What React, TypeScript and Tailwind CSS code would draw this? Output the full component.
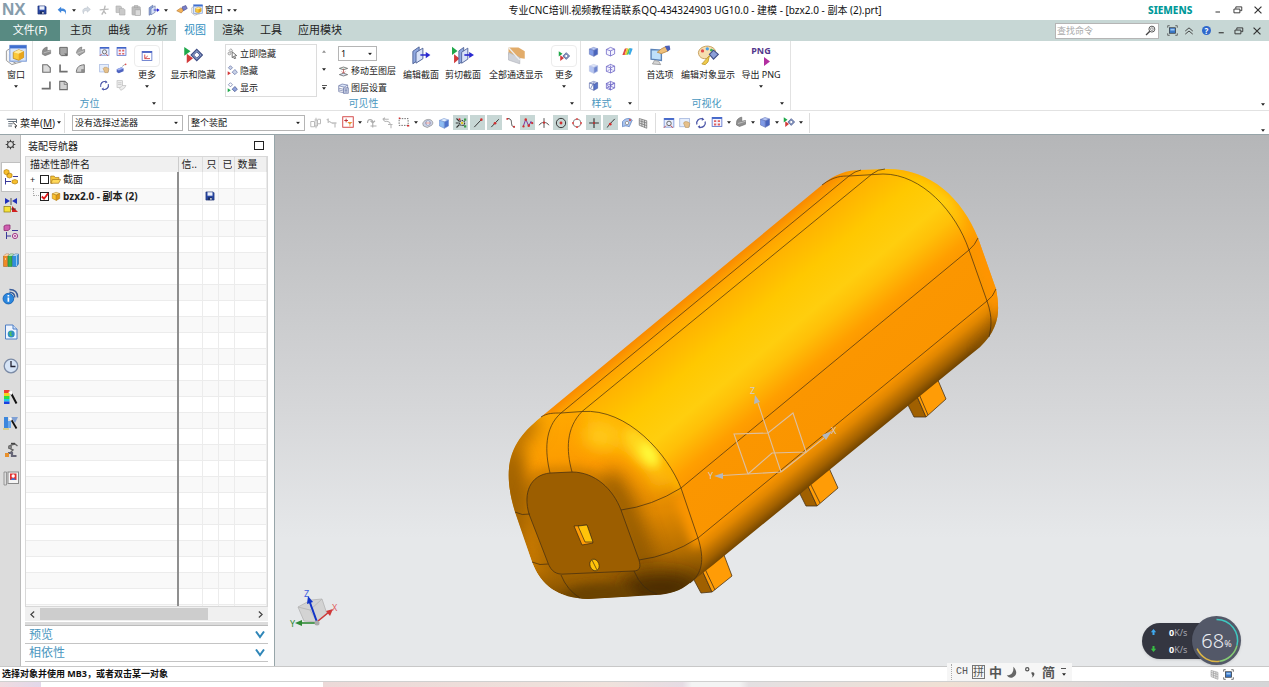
import { ReactNode } from 'react';
import clsx from 'clsx';

const cube = (top: string, left: string, right: string, stroke = '#3d4f9c') => (
  <g stroke={stroke} strokeWidth="0.8" strokeLinejoin="round">
    <path d="M2 4.5 L8 2 L14 4 L8.5 6.5Z" fill={top} />
    <path d="M2 4.5 L8.5 6.5 V15 L2 12Z" fill={left} />
    <path d="M8.5 6.5 L14 4 V12 L8.5 15Z" fill={right} />
  </g>
);

const wireCube = (extra?: ReactNode) => (
  <g fill="#f4f4ff" stroke="#6a62c4" strokeWidth="1.1" strokeLinejoin="round">
    <path d="M2 5 L8 2 L14 4.5 V11.5 L8 14.5 L2 12Z" />
    <path d="M2 5 L8 7 L14 4.5 M8 7 V14.5" fill="none" />
    {extra}
  </g>
);

const redGreen = (
  <g>
    <path d="M1 1.5 L6 5 L1 8.5Z" fill="#1fa84a" />
    <path d="M3 7 L8 10.5 L3 14.5Z" fill="#d23a3a" />
  </g>
);

const ICONS: Record<string, ReactNode> = {
  save: (
    <g>
      <path d="M1.5 1.5 H13 L14.5 3 V14.5 H1.5Z" fill="#2b4aa8" stroke="#152a6c" />
      <path d="M4 2 H12 V7.5 H4Z" fill="#eef2fb" />
      <path d="M4.5 10 H11.5 V14.5 H4.5Z" fill="#1b2d60" />
      <path d="M8.5 11 H10.5 V14 H8.5Z" fill="#fff" />
    </g>
  ),
  undo: <path d="M1 7 L6 2.5 V5 C12 4.5 15 8 12 14 C12.5 9.5 10 8.5 6 9 V11.5Z" fill="#3f86dc" />,
  redo: <path d="M15 7 L10 2.5 V5 C4 4.5 1 8 4 14 C3.5 9.5 6 8.5 10 9 V11.5Z" fill="#d5dbe2" stroke="#b4bcc6" strokeWidth="0.8" />,
  cut: <path d="M9 1 L7 9 M1 7 L14 6 M7 9 L4 14 M7 9 L10 13" stroke="#b9b9b9" strokeWidth="2" fill="none" />,
  copy: (
    <g fill="#c9c9c9" stroke="#b0b0b0">
      <path d="M1.5 1.5 H8 L9.5 3 V11 H1.5Z" />
      <path d="M6.5 5 H12.5 L14.5 7 V14.5 H6.5Z" />
    </g>
  ),
  paste: (
    <g fill="#bdbdbd" stroke="#a8a8a8">
      <rect x="1.5" y="2.5" width="12" height="12" rx="1" />
      <rect x="5" y="1" width="5" height="3" />
      <rect x="6" y="7" width="8" height="8" fill="#dadada" />
    </g>
  ),
  section: (
    <g strokeLinejoin="round">
      <path d="M1.5 5 L6.500 1.5 V11.5 L1.5 15Z" fill="#8fa8e0" stroke="#55689c" strokeWidth="0.8" />
      <path d="M4 6 L9.5 2.5 V11 L4 14.5Z" fill="#d8e2f8" stroke="#55689c" strokeWidth="0.8" />
      <path d="M7.5 8 H13" stroke="#2a2ad0" strokeWidth="1.2" />
      <path d="M11.8 5.5 L15.5 8 L11.8 10.5Z" fill="#2a2ad0" />
    </g>
  ),
  touch: (
    <g>
      <path d="M1 9 L6 5.5 L11 7 L7 12Z" fill="#f3b35a" stroke="#b0702a" strokeWidth="0.8" />
      <path d="M8 4 L13 2 L15 6 L10 9Z" fill="#7a7fc6" stroke="#42478e" strokeWidth="0.8" />
    </g>
  ),
  windowCube: (
    <g>
      <path d="M1 5 L4 3 V12 L8 14 L12 13 M1 5 V12 L5 15 L8 14" fill="#f4f4f4" stroke="#9a9a9a" strokeWidth="0.7" />
      <rect x="3.5" y="1" width="12" height="11.5" fill="#d7e5fb" stroke="#7f9ed8" strokeWidth="0.8" />
      <rect x="3.5" y="1" width="12" height="2.2" fill="#3f6fd0" />
      <path d="M6 6 L10 4.2 L13.5 5.5 V9.8 L10 11.8 L6 10.5Z" fill="#fbc93a" stroke="#b07c12" strokeWidth="0.5" />
      <path d="M6 6 L10 7 L13.5 5.5 L10 4.2Z" fill="#ffeaa0" />
      <path d="M10 7 L13.5 5.5 V9.8 L10 11.8Z" fill="#e8a51e" />
    </g>
  ),
  trimetric: (
    <g stroke="#666" strokeWidth="0.8">
      <path d="M2 9 C2 4 6 2 9 1.5 V7 L14 6 V11 L6 14 L2 12Z" fill="#8f8f8f" />
      <path d="M4 10 L14 7" stroke="#ddd" />
    </g>
  ),
  top: (
    <g>
      <path d="M2.5 2 H13.5 V14 H5 L2.5 12Z" fill="#a8a8a8" stroke="#5f5f5f" strokeWidth="1.3" />
      <path d="M9 11 H13 V14 L11 13Z" fill="#666" />
    </g>
  ),
  iso: (
    <g stroke="#666" strokeWidth="0.8">
      <path d="M2 10 C3 5 6 2 10 1.5 L9 6 L14 5 V9 L6 14Z" fill="#a5a5a5" />
      <path d="M3 11 L13 7" stroke="#e4e4e4" />
    </g>
  ),
  front: <path d="M2.5 2.5 H9 L13.5 7 V13.5 H2.5Z" fill="#dcdcdc" stroke="#6f6f6f" strokeWidth="1.6" />,
  right: <path d="M3 2 V12.5 H14" fill="none" stroke="#6f6f6f" strokeWidth="2.4" />,
  back: (
    <g>
      <path d="M2 12 C3 6 6 3 13.5 2.5 V13.5 H2Z" fill="#cfcfcf" stroke="#6f6f6f" strokeWidth="1.4" />
      <path d="M9 9 H14 V14 H9Z" fill="#8c8c8c" />
    </g>
  ),
  left: <path d="M13 2 V12.5 H1" fill="none" stroke="#6f6f6f" strokeWidth="2.4" />,
  bottom: (
    <g>
      <path d="M2.5 2 H10 L13.5 5 V14 H2.5Z" fill="#d2d2d2" stroke="#6f6f6f" strokeWidth="1.6" />
      <path d="M9 3 V6.5 H13" fill="none" stroke="#6f6f6f" />
    </g>
  ),
  fit: (
    <g>
      <rect x="1.5" y="2" width="13" height="11.5" fill="#e8eefc" stroke="#6f8ad6" />
      <rect x="1.5" y="1.5" width="13" height="2.4" fill="#3f63c8" />
      <circle cx="8" cy="8.5" r="3" fill="none" stroke="#666" strokeWidth="1.3" />
      <path d="M10 11 L13 14.5 M1 14.5 L4 11.5" stroke="#c55" strokeWidth="1.3" />
    </g>
  ),
  zoomAll: (
    <g>
      <rect x="1.5" y="2" width="13" height="12" fill="#f4f4ff" stroke="#4a63c4" />
      <rect x="1.5" y="1.5" width="13" height="2.4" fill="#3f63c8" />
      <path d="M4 5.5 H7 V8 H4Z M9 5.5 H12 V8 H9Z M4 10 H7 V12.5 H4Z M9 10 H12 V12.5 H9Z" fill="#e06464" />
    </g>
  ),
  pan: (
    <g>
      <rect x="1" y="2" width="13" height="11" fill="#e6eefc" stroke="#9fb2dc" />
      <path d="M6 8 C8 5 12 6 14.5 8.5 L13 14 H8.5Z" fill="#e6c08a" stroke="#b18c52" strokeWidth="0.7" />
    </g>
  ),
  perspective: (
    <g>
      <path d="M1 9 L8 6 L11 8 V12 L4 15 L1 13Z" fill="#4e63c0" />
      <path d="M1 9 L8 6 L11 8 L4 11Z" fill="#9fb0f0" />
      <path d="M9 5 L13 2" stroke="#888" />
      <circle cx="14" cy="2" r="1.2" fill="#e05050" />
    </g>
  ),
  rotate: (
    <g fill="none" stroke="#4b56a8" strokeWidth="1.7">
      <path d="M2.5 10 A6 6 0 0 1 10 2.5 M13.5 6 A6 6 0 0 1 6 13.5" />
      <path d="M9.5 0.5 L12.5 3.2 L9 5Z M6.5 11 L3.5 13 L7 15.5Z" fill="#4b56a8" stroke="none" />
    </g>
  ),
  clipboardGrey: (
    <g fill="#ededed" stroke="#bdbdbd">
      <rect x="1.5" y="1" width="8" height="10" />
      <path d="M5 12 L9 8 L14.5 8 L12 12 L7 15Z" />
      <path d="M3 4 H8 M3 6.5 H8" />
    </g>
  ),
  orient: (
    <g>
      <rect x="1.5" y="2" width="13" height="12" fill="#fff" stroke="#4a63c4" />
      <rect x="1.5" y="1.5" width="13" height="2.4" fill="#4a63c4" />
      <path d="M5 6 V11.5 H12 M5 11.5 L9 8" fill="none" stroke="#d04040" strokeWidth="1.2" />
    </g>
  ),
  showHide: (
    <g>
      {redGreen}
      <path d="M6.5 8 L11 3.5 L15.5 8 L11 12.5Z" fill="#8b9fc8" stroke="#3f4e86" strokeWidth="0.9" />
      <path d="M8.5 8 L11 5.5 L13.5 8 L11 10.5Z" fill="#fff" stroke="#3f4e86" strokeWidth="0.7" />
    </g>
  ),
  hideNow: (
    <g>
      <path d="M3 3.5 L5.5 1 L8 3.5 L5.5 6Z" fill="#e6e6e6" stroke="#888" />
      <circle cx="3.5" cy="8" r="2" fill="#e6e6e6" stroke="#888" />
      <path d="M7.5 5.5 L14 11 L11 11.5 L12.5 15 L10.5 15.5 L9.5 12.5 L7.5 14Z" fill="#fff" stroke="#333" />
    </g>
  ),
  hide: (
    <g>
      <path d="M1 9 L5.5 12 L1 15Z" fill="#d23a3a" />
      <path d="M2 4 L5 1 L8 4 L5 7Z" fill="#c9d2e8" stroke="#5f6da0" />
      <path d="M7.5 10.5 L11.5 6.5 L15 10.5 L11.5 14Z" fill="#c9d2e8" stroke="#5f6da0" />
    </g>
  ),
  show: (
    <g>
      <path d="M1 9 L5.5 12 L1 15Z" fill="#1fa84a" />
      <path d="M2 4 L5 1 L8 4 L5 7Z" fill="#fff" stroke="#5f6da0" />
      <path d="M7.5 10.5 L11.5 6.5 L15 10.5 L11.5 14Z" fill="#8fa2dc" stroke="#3f4e86" />
    </g>
  ),
  moveLayer: (
    <g fill="none" stroke="#555">
      <path d="M2 3.5 L8 1.5 L14 3.5 L8 5.5Z" fill="#e4f0e8" />
      <path d="M2 12.5 L8 10.5 L14 12.5 L8 14.5Z" fill="#dfe7f8" />
      <path d="M8 4 V10 M5.5 8 L8 10.5 L10.5 8" stroke="#b54040" />
    </g>
  ),
  layers: (
    <g stroke="#59679a" strokeWidth="0.9">
      <path d="M1 4 L6 1.5 L14 3 L9 6Z" fill="#dce6fa" />
      <path d="M1 7.5 L9 9.5 L14 6.5 M1 10 L9 12 L14 9 M1 12.5 L9 14.5 L14 12 M1 4 V12.5 M14 3 V12" fill="none" />
      <path d="M8 7 H15 V15 H8Z" fill="#d7def0" />
      <path d="M9.5 9 H13.5 M9.5 11 H13.5 M9.5 13 H13.5" />
    </g>
  ),
  cutSection: (
    <g strokeLinejoin="round">
      <path d="M0 2 L4 5 L0 8Z" fill="#1fa84a" />
      <path d="M1.5 7.5 L5.5 10.5 L1.5 14Z" fill="#d23a3a" />
      <path d="M5 5 L8.5 2.5 V12 L5 14.5Z" fill="#8fa8e0" stroke="#55689c" strokeWidth="0.7" />
      <path d="M7 6 L11.5 3 V11 L7 14Z" fill="#d8e2f8" stroke="#55689c" strokeWidth="0.7" />
      <path d="M9 8 H13" stroke="#2a2ad0" strokeWidth="1.2" />
      <path d="M12.5 5.8 L16 8 L12.5 10.2Z" fill="#2a2ad0" />
    </g>
  ),
  seeThrough: (
    <g>
      <path d="M2 2 H10 L15 5 V11 L8 10 L2 8Z" fill="#e2ac6a" />
      <path d="M2 6 L11 10 V15 L2 12Z" fill="#cfd2d8" stroke="#b7bac2" strokeWidth="0.6" />
      <path d="M2 2 L11 12" stroke="#eee" />
    </g>
  ),
  shaded: cube('#b9c9f6', '#7f9ae6', '#4864bd', '#5f72b8'),
  shadedSoft: cube('#dfe6fb', '#b4c4f2', '#6f86cf', '#b4bfe4'),
  halfCube: (
    <g>
      {cube('#e9eefc', '#fff', '#5873c8')}
      <path d="M4 12 L9 3" stroke="#4a5cae" />
    </g>
  ),
  wire: wireCube(),
  wireDash: wireCube(<path d="M2 12 L8 9 L14 11.5 M8 2 V9" strokeDasharray="1.5 1" fill="none" />),
  wireAll: wireCube(<path d="M2 12 L14 4.5 M8 2 L8 9 L14 11.5 M2 5 L8 14.5" fill="none" />),
  rainbow: (
    <g>
      <path d="M4 4 L7 3 L4 13 L0.5 13Z" fill="#e04848" />
      <path d="M7 3 L9.5 4 L6.5 13 H4Z" fill="#f3c92b" />
      <path d="M9.5 4 L12 3 L9.5 12 L6.5 13Z" fill="#54c455" />
      <path d="M12 3 L15.5 4 L12 13 L9.5 12Z" fill="#3aa8e8" />
    </g>
  ),
  prefs: (
    <g>
      <path d="M1.5 4 L9 4.5 V12 L1.5 11Z" fill="#bfe0fa" stroke="#5b83b8" />
      <path d="M4 12 L7 12.5 L8.500 15 L2.5 14.5Z" fill="#d5d5d5" stroke="#999" strokeWidth="0.6" />
      <path d="M6 6 L9 3.5 L12 2 L14 5 L9 7Z" fill="#f0c07a" stroke="#b98948" strokeWidth="0.6" />
      <path d="M11.5 1.5 L15 1 L15.5 4 L13.5 5.5Z" fill="#4a5fb8" />
    </g>
  ),
  palette: (
    <g>
      <path d="M1 6 C2 1 10 0 13 4 C15 8 10 8 9 9 C7 12 1 11 1 6Z" fill="#f6deb0" stroke="#c7a060" strokeWidth="0.7" />
      <circle cx="4" cy="5" r="1.2" fill="#e24b4b" />
      <circle cx="7.5" cy="3.5" r="1.2" fill="#49a0e8" />
      <circle cx="10.5" cy="4.5" r="1" fill="#3db35a" />
      <path d="M3.500 14.5 L9 8.5 L8 13 L6 15Z" fill="#f0cb4c" stroke="#b8942c" strokeWidth="0.6" />
      <path d="M9 7.5 L12 4.5 L15.5 7.5 L12 11Z" fill="#8b9fd8" stroke="#3f4e86" strokeWidth="0.8" />
    </g>
  ),
  menu: (
    <g fill="none" stroke="#5f6b78" strokeWidth="1.3">
      <path d="M1 3 H14 M3 6 H14 M3 9 H9 M3 12 H8 M14 3 V8" />
      <path d="M9 7 L14.5 12 L12 12.5 L13 15" stroke="#333" fill="#fff" />
    </g>
  ),
  filterGrey: <path d="M1 6 H6 V13 H1Z M6 4 H10 V12 H6 M10 3 H14 V9 H10 M8 1 V15" fill="none" stroke="#b2b2b2" strokeWidth="1.2" />,
  dotsGrey: <path d="M1 3 L6 7 M3 2 V8 M8 8 H14 M12 8 V14 M6 7 L10 9" fill="none" stroke="#c2c2c2" strokeWidth="1.7" />,
  snapBox: (
    <g>
      <rect x="1" y="1" width="14" height="14" fill="#fff" stroke="#d03a3a" strokeWidth="1.2" />
      <path d="M3 6 H8 M5.5 3.5 V8.5" stroke="#c03030" strokeWidth="1.3" />
      <path d="M7 8 L14 8 L11 11 V14 L10 14 V11Z" fill="#e8963a" />
    </g>
  ),
  arrowGrey: <path d="M2 8 C2 2 9 2 9 7 M6 5 L9 8 L12 5 M9 8 V14 M6 12 H14" fill="none" stroke="#adadad" strokeWidth="1.5" />,
  filterArrow: <path d="M1 3 H9 M4 6 C8 5 11 7 11 10 M8 10 H14 M12 10 V15 M1 3 L4 1 M1 3 L4 6" fill="none" stroke="#b5b5b5" strokeWidth="1.4" />,
  marquee: (
    <g>
      <rect x="1.5" y="3.5" width="12" height="9" fill="none" stroke="#444" strokeDasharray="2 1.5" />
      <path d="M1 3 L3 3 M12 13 H15" stroke="#d03030" strokeWidth="2" />
    </g>
  ),
  detail: (
    <g stroke="#777" strokeWidth="0.8">
      <path d="M1 9 C2 4 8 2 12 4 C15 6 15 9 13 11 L7 14 L2 12Z" fill="#ccd3e6" />
      <circle cx="8" cy="8" r="3" fill="#fff" stroke="#6470a4" />
      <path d="M5 8 L11 8" stroke="#c04040" />
    </g>
  ),
  solid: cube('#e4f0ff', '#8dbcf2', '#4e74cc', '#6f90d0'),
  snapAll: (
    <g>
      <path d="M2 2 L6 6 M2 14 L6 10 M1 8 H5" stroke="#333" strokeWidth="1.5" />
      <circle cx="9.5" cy="8" r="3.4" fill="none" stroke="#333" strokeWidth="1.4" strokeDasharray="2 1" />
      <circle cx="9.5" cy="8" r="1.6" fill="#e3c521" />
      <path d="M12 2 H15 V5 H12Z M12 11 H15 V14 H12Z" fill="#3b9b4a" />
      <circle cx="6" cy="3" r="1.4" fill="#d03030" />
    </g>
  ),
  endPoint: (
    <g>
      <path d="M3 13.5 L12 4" stroke="#333" strokeWidth="1.3" />
      <circle cx="12.5" cy="3.5" r="1.7" fill="#d03030" />
    </g>
  ),
  midPoint: (
    <g>
      <path d="M3 13.5 L13 3" stroke="#333" strokeWidth="1.3" />
      <circle cx="8" cy="8.3" r="1.8" fill="#d03030" />
    </g>
  ),
  curvePoint: (
    <g>
      <path d="M3 2 C10 2 8 7 9 10 C9.5 13 11 13 13 13.5" fill="none" stroke="#333" strokeWidth="1.2" />
      <circle cx="3" cy="2.5" r="1.3" fill="#d03030" />
      <circle cx="12" cy="13" r="1.3" fill="#d03030" />
    </g>
  ),
  spline: (
    <g>
      <path d="M1.5 13 L5 3 L9 12 L12 6 L14.5 9" fill="none" stroke="#7a2fa0" strokeWidth="1.3" />
      <circle cx="5" cy="3.5" r="1.7" fill="#d03030" />
      <circle cx="9" cy="11.5" r="1.7" fill="#d03030" />
      <circle cx="2" cy="12.5" r="1.5" fill="#d03030" />
      <circle cx="13.5" cy="8" r="1.5" fill="#d03030" />
    </g>
  ),
  intersect: (
    <g>
      <path d="M8 1.5 V14.5 M1.5 11 C4 6 12 6 14.5 11" fill="none" stroke="#444" strokeWidth="1.2" />
      <circle cx="8" cy="7.5" r="1.5" fill="#d03030" />
    </g>
  ),
  center: (
    <g>
      <circle cx="8" cy="8" r="6.2" fill="none" stroke="#333" strokeWidth="1.3" />
      <circle cx="8" cy="8" r="1.9" fill="#d03030" />
    </g>
  ),
  quadrant: (
    <g>
      <circle cx="8" cy="8" r="5.2" fill="none" stroke="#666" />
      <path d="M6.5 1.5 H9.5 V4 H6.5Z M6.5 12 H9.5 V14.5 H6.5Z M1.5 6.5 H4 V9.5 H1.5Z M12 6.5 H14.5 V9.5 H12Z" fill="#d86060" />
    </g>
  ),
  plus: (
    <g>
      <path d="M8 1.5 V14.5 M1.5 8 H14.5" stroke="#333" strokeWidth="1.5" />
      <circle cx="8" cy="8" r="1.3" fill="#d03030" />
    </g>
  ),
  onCurve: (
    <g>
      <path d="M3 14 C5 10 9 7 13 2.5" fill="none" stroke="#333" strokeWidth="1.3" />
      <circle cx="7" cy="9.5" r="1.8" fill="#d03030" />
    </g>
  ),
  face: (
    <g>
      <path d="M2 6 C6 1 12 1 15 4 L11 13 C7 11 4 12 2 13Z" fill="#a9c4ee" stroke="#5d80bf" />
      <circle cx="8" cy="8" r="2.2" fill="#fff" stroke="#888" />
      <circle cx="12" cy="4" r="1.5" fill="#d05050" />
    </g>
  ),
  grid: <path d="M3 2 L13 5 V15 L3 11Z M3 5 L13 8 M3 8 L13 11.5 M6.5 3 V12.5 M10 4 V14" fill="#ddd" stroke="#777" />,
  gear: (
    <g fill="none" stroke="#444">
      <circle cx="8" cy="8" r="4.3" strokeWidth="1.6" />
      <path d="M8 1 V4 M8 12 V15 M1 8 H4 M12 8 H15 M3 3 L5 5 M11 11 L13 13 M3 13 L5 11 M11 5 L13 3" strokeWidth="1.5" />
    </g>
  ),
  assemblyNav: (
    <g>
      <path d="M1 1.500 L3.500 0.500 L6 1.5 V4.5 L3.5 6 L1 4.5Z M4 5 L6.5 4 L9 5 V8 L6.5 9 L4 8Z" fill="#f7bf2c" stroke="#b3800e" strokeWidth="0.7" />
      <path d="M2.5 9 V15.500 M2.5 12.5 H8 M10 7.5 H15" stroke="#3a3a9a" />
      <path d="M9 11.5 L12 10.5 L14.5 11.5 V14 L12 15 L9 14Z" fill="#f7bf2c" stroke="#b3800e" strokeWidth="0.7" />
    </g>
  ),
  constraint: (
    <g>
      <path d="M2 1 L7 4 L2 7Z M14 1 L9 4 L14 7Z" fill="#2030b8" />
      <path d="M8 1 V8" stroke="#333" strokeWidth="0.8" />
      <rect x="1" y="9.5" width="6.5" height="5.5" fill="#f6e23a" stroke="#8a7a10" strokeWidth="0.7" />
      <path d="M9 9 L15 15 H9Z" fill="#d02020" />
      <path d="M8 12 H13" stroke="#222" strokeWidth="0.7" />
    </g>
  ),
  partNav: (
    <g>
      <path d="M1 2 L3 1 H7 V5 L5 6.500 H1Z" fill="#cf5fb0" stroke="#8d2f72" strokeWidth="0.8" />
      <path d="M3.5 8 V15 M3.5 12 H8 M9 6.5 H15" stroke="#3a3a9a" />
      <circle cx="12" cy="12" r="2.6" fill="#f3dbed" stroke="#a03c86" />
      <circle cx="12" cy="12" r="0.9" fill="#a03c86" />
    </g>
  ),
  library: (
    <g strokeWidth="0.5">
      <path d="M0.5 4 L3 2 H6 L4.5 4 V14.5 H0.5Z" fill="#f08a24" stroke="#a4570e" />
      <path d="M5 4 L7.5 2 H10.5 L9 4 V14.5 H5Z" fill="#35b04a" stroke="#1c7430" />
      <path d="M9.5 4 L12 2 H15.5 V12 L13.5 14.5 H9.5Z" fill="#2f8fdc" stroke="#15589a" />
      <path d="M0.500 4 H4.5 L6 2 H3Z M5 4 H9 L10.5 2 H7.5Z M9.5 4 H13.5 L15.5 2 H12Z" fill="#fff" opacity="0.6" />
      <path d="M13.5 4 V14 M2.500 6 V8" stroke="#fff" />
    </g>
  ),
  info: (
    <g>
      <path d="M7 4 C10 4 12 6 12 9 M7 1.5 C12 1.5 14.7 4.5 14.7 9" fill="none" stroke="#3a5d9a" strokeWidth="1.4" />
      <circle cx="6" cy="10" r="5" fill="#2b87df" stroke="#155fae" strokeWidth="0.8" />
      <path d="M5.2 9 H6.8 V13 H5.2Z M5.2 6.5 H6.8 V8 H5.2Z" fill="#fff" />
    </g>
  ),
  web: (
    <g>
      <path d="M2.5 1 H10 L14 5 V15 H2.5Z" fill="#eef5ff" stroke="#4e7fc4" />
      <path d="M10 1 V5 H14" fill="#cfe0f8" stroke="#4e7fc4" />
      <circle cx="8.2" cy="10" r="3.5" fill="#2f8fc4" />
      <path d="M6 8 L9 7.5 L8 10 L9.5 12 L7 12Z" fill="#4fc05a" />
    </g>
  ),
  clock: (
    <g>
      <circle cx="8" cy="8" r="6.8" fill="#d6e4f6" stroke="#7b8ba6" strokeWidth="1.3" />
      <path d="M8 3 V8.5 H12.5" fill="none" stroke="#223" strokeWidth="1.3" />
    </g>
  ),
  colors: (
    <g>
      <path d="M1 1 H6.5 V4 H1Z" fill="#f04030" />
      <path d="M1 4 H6.5 V7 H1Z" fill="#f7d21e" />
      <path d="M1 7 H6.5 V10 H1Z" fill="#30e040" />
      <path d="M1 10 H6.5 V12.5 H1Z" fill="#20c8e8" />
      <path d="M1 12.5 H6.5 V15 H1Z" fill="#1840e0" />
      <path d="M8.500 5 L13.5 14.5" stroke="#111" strokeWidth="2" />
      <path d="M5 3 L9 2 L9 6Z" fill="#fff" />
    </g>
  ),
  materials: (
    <g>
      <path d="M1 3 H5 V14 H1Z" fill="#3d87dc" />
      <path d="M5 7 H8 V14 H5Z" fill="#6ba8ea" />
      <path d="M8 3 H15 L12 9Z" fill="#7fa0d4" />
      <path d="M8.500 6 L13.5 14.5" stroke="#111" strokeWidth="1.8" />
      <path d="M5.500 4 L8.500 3.500 L8.500 7Z" fill="#fff" />
      <path d="M0 15 H6" stroke="#d8c040" />
    </g>
  ),
  robot: (
    <g fill="none" stroke="#666" strokeWidth="1.4">
      <path d="M14.500 4 L12 2 L8 3 L6 6 L10 8 L7 11" />
      <path d="M8 1.500 H12" stroke="#444" />
      <circle cx="7" cy="5" r="1.3" fill="#ddd" />
      <path d="M5 11 H9 V14 H13.500" stroke="#667" strokeWidth="2.200" />
      <path d="M2 11 H6 V15 H2Z" fill="#e8902c" stroke="none" />
    </g>
  ),
  roles: (
    <g>
      <path d="M1 2 H3.5 V15 H1Z" fill="#ddd" stroke="#888" strokeWidth="0.8" />
      <rect x="5" y="2" width="10.5" height="11.5" fill="#f4f4f4" stroke="#888" />
      <rect x="7" y="3.5" width="6.5" height="6.5" fill="#e23030" />
      <circle cx="10.2" cy="6" r="1.7" fill="#fff" />
      <path d="M8 10 C8 7.5 12.5 7.5 12.5 10Z" fill="#3a78d8" />
    </g>
  ),
  folder: (
    <g strokeLinejoin="round">
      <path d="M1 3 H6 L7.5 5 H13 V8 L3 13.5 H1Z" fill="#f6c63a" stroke="#a8781a" />
      <path d="M3.5 8 H15.5 L12.5 13.5 H1.5Z" fill="#ffd95a" stroke="#a8781a" />
    </g>
  ),
  part: cube('#ffe48a', '#fbc22e', '#e09a12', '#a87210'),
  search: (
    <g fill="none" stroke="#444" strokeWidth="1.3">
      <circle cx="10" cy="6" r="4.3" />
      <circle cx="10" cy="6" r="2" strokeWidth="0.8" />
      <path d="M7 9 L1.5 14.5" strokeWidth="2" />
    </g>
  ),
  fullScreen: (
    <g>
      <path d="M1 4 V1 H4 M12 1 H15 V4 M15 12 V15 H12 M4 15 H1 V12" fill="none" stroke="#555" strokeWidth="1.2" />
      <rect x="3.5" y="4" width="9" height="8" fill="#3a78c8" stroke="#333" />
      <path d="M5 5.5 H11 V8 H5Z" fill="#9cc8f4" />
    </g>
  ),
  chevronsUp: <path d="M2 8 L8 3 L14 8 M2 13 L8 8 L14 13" fill="none" stroke="#444" strokeWidth="1.6" />,
  minimize: <path d="M3 12 H12" stroke="#333" strokeWidth="2" />,
  restore: <path d="M4.5 6 V3 H14 V9 H11.5 M1.5 6.5 H11 V12.5 H1.5Z" fill="none" stroke="#333" strokeWidth="1.5" />,
  close: <path d="M2.5 2.5 L13.5 13.5 M13.5 2.5 L2.5 13.5" stroke="#333" strokeWidth="1.9" />,
  moon: <path d="M9 1 C14 6 14 12 8 14 C5 15 2 13.5 1 11 C5 12.5 10 9 9 1Z" fill="#666" />,
  punct: (
    <g>
      <circle cx="4" cy="4" r="2" fill="none" stroke="#555" strokeWidth="1.5" />
      <path d="M9 8 C14 6 14 12 9.5 14.5 C12 11 9 11 9 8Z" fill="#555" />
    </g>
  ),
};

function Icon({ name, className = 'size-3' }: { name: string; className?: string }) {
  return (
    <svg viewBox="0 0 16 16" className={clsx('shrink-0', className)} aria-hidden="true">
      {ICONS[name]}
    </svg>
  );
}

function Caret({ className }: { className?: string }) {
  return (
    <svg viewBox="0 0 6 4" className={clsx('h-[3px] w-1 shrink-0', className)} aria-hidden="true">
      <path d="M0 0 H6 L3 4Z" fill="#222" />
    </svg>
  );
}

function IconButton({ name, label, className, icon = 'size-3' }: { name: string; label: string; className?: string; icon?: string }) {
  return (
    <button aria-label={label} className={clsx('flex shrink-0 items-center justify-center hover:bg-[#dbe8e6]', className)}>
      <Icon name={name} className={icon} />
    </button>
  );
}

function DropArrow({ label, className = 'h-4 w-2' }: { label: string; className?: string }) {
  return (
    <button aria-label={label} className={clsx('flex shrink-0 items-center justify-center', className)}>
      <Caret />
    </button>
  );
}

interface SelectProps {
  label: string;
  value: string;
  className: string;
}

function SelectBox({ label, value, className }: SelectProps) {
  return (
    <div className={clsx('relative shrink-0', className)}>
      <select aria-label={label} className="block size-full appearance-none border border-[#b5b5b5] bg-white pl-[2px] text-[9px] leading-[13px] text-[#111]">
        <option>{value}</option>
      </select>
      <Caret className="pointer-events-none absolute top-1/2 right-[5px] -translate-y-1/2" />
    </div>
  );
}

function TitleBar() {
  return (
    <header className="flex h-5 shrink-0 items-center bg-white">
      <div className="flex w-[242px] shrink-0 items-center">
        <span className="w-[34px] shrink-0 pl-[2px] font-['Liberation_Sans',sans-serif] text-[17px] leading-5 font-bold text-[#869cab]">NX</span>
        <IconButton name="save" label="保存" className="h-4 w-4" icon="size-[10px]" />
        <IconButton name="undo" label="撤消" className="ml-1 h-4 w-4" icon="size-[11px]" />
        <DropArrow label="撤消列表" />
        <IconButton name="redo" label="重做" className="h-4 w-4" icon="size-[10px]" />
        <IconButton name="cut" label="剪切" className="ml-[2px] h-4 w-4" icon="size-[11px]" />
        <IconButton name="copy" label="复制" className="h-4 w-4" icon="size-[11px]" />
        <IconButton name="paste" label="粘贴" className="h-4 w-4" icon="size-[11px]" />
        <IconButton name="section" label="截面" className="ml-[2px] h-4 w-4" icon="size-3" />
        <DropArrow label="截面选项" />
        <IconButton name="touch" label="触控模式" className="ml-1 h-4 w-4" icon="size-3" />
        <button className="ml-px flex shrink-0 items-center gap-[2px] text-[9px] leading-4 whitespace-nowrap">
          <Icon name="windowCube" className="size-3" />
          窗口
          <Caret className="ml-[2px]" />
        </button>
        <DropArrow label="工具条选项" />
      </div>
      <h1 className="flex-1 text-center text-[10px] leading-5 whitespace-nowrap text-[#111]">
        专业CNC培训.视频教程请联系QQ-434324903 UG10.0 - 建模 - [bzx2.0 - 副本 (2).prt]
      </h1>
      <span className="w-[62px] text-[10px] leading-5 font-extrabold text-[#099]">SIEMENS</span>
      <IconButton name="minimize" label="最小化" className="h-4 w-4" icon="size-2" />
      <IconButton name="restore" label="还原" className="ml-1 h-4 w-4" icon="size-[10px]" />
      <IconButton name="close" label="关闭" className="mr-[3px] ml-1 h-4 w-4" icon="size-[10px]" />
    </header>
  );
}

const TABS = ['主页', '曲线', '分析', '视图', '渲染', '工具', '应用模块'];

function TabBar() {
  return (
    <nav className="flex h-[21px] shrink-0 items-stretch bg-[#c7d7d5] text-[11px] text-[#222]">
      <button className="mr-[2px] w-[60px] bg-[#588a82] text-white">文件(F)</button>
      {TABS.map((tab) => (
        <button key={tab} className={clsx('px-2', tab === '视图' && 'bg-white text-[#2f8fc0]')}>
          {tab}
        </button>
      ))}
      <div className="ml-auto flex items-center">
        <div className="flex h-4 w-[104px] items-center border border-[#b5b5b5] bg-white">
          <input aria-label="查找命令" placeholder="查找命令" className="w-[89px] pl-px text-[9px] leading-3 outline-none placeholder:text-[#aaa]" />
          <Icon name="search" className="size-[11px]" />
        </div>
        <IconButton name="fullScreen" label="全屏" className="ml-[5px] h-4 w-4" icon="size-[11px]" />
        <IconButton name="chevronsUp" label="最小化功能区" className="ml-px h-4 w-4" icon="size-[10px]" />
        <button aria-label="帮助" className="ml-[5px] size-[9px] rounded-full bg-[#2f68cc] text-[8px] leading-[9px] font-bold text-white">
          ?
        </button>
        <IconButton name="minimize" label="最小化窗口" className="ml-[2px] h-4 w-4" icon="size-[9px]" />
        <IconButton name="restore" label="还原窗口" className="ml-[2px] h-4 w-4" icon="size-[10px]" />
        <IconButton name="close" label="关闭窗口" className="mr-1 ml-[2px] h-4 w-4" icon="size-[10px]" />
      </div>
    </nav>
  );
}

function Group({ label, className, children }: { label: string; className?: string; children: ReactNode }) {
  return (
    <section aria-label={label} className={clsx('flex shrink-0 flex-col border-r border-[#e2e2e2]', className)}>
      <div className="flex h-[55px] items-start pt-px">{children}</div>
      <div className="flex h-[14px] items-center">
        <span className="flex-1 text-center text-[10px] leading-[14px] text-[#4a97c0]">{label}</span>
        <DropArrow label={`${label}选项`} className="h-3 w-4" />
      </div>
    </section>
  );
}

interface BigButtonProps {
  name: string;
  label: string;
  className: string;
  arrow?: boolean;
  icon?: string;
}

function BigButton({ name, label, className, arrow, icon = 'size-5' }: BigButtonProps) {
  return (
    <button className={clsx('flex shrink-0 flex-col items-center hover:bg-[#eef5f4]', className)}>
      <span className="flex h-[25px] items-center justify-center">
        <Icon name={name} className={icon} />
      </span>
      <span className="text-[9px] leading-4 whitespace-nowrap">{label}</span>
      {arrow && <Caret className="mt-[2px]" />}
    </button>
  );
}

function MoreButton({ name, className }: { name: string; className?: string }) {
  return (
    <button className={clsx('flex w-[26px] shrink-0 flex-col items-center', className)}>
      <span className="mt-[3px] flex h-[22px] w-full items-center justify-center rounded-sm border border-[#ececec]">
        <Icon name={name} className="size-3" />
      </span>
      <span className="text-[9px] leading-4">更多</span>
      <Caret className="mt-[2px]" />
    </button>
  );
}

const VIEWS = [
  ['trimetric', '正三轴测图'],
  ['top', '俯视图'],
  ['iso', '正等测图'],
  ['front', '前视图'],
  ['right', '右视图'],
  ['back', '后视图'],
  ['left', '左视图'],
  ['bottom', '仰视图'],
];

const VIEW_OPS = [
  ['fit', '适合窗口'],
  ['zoomAll', '缩放'],
  ['pan', '平移'],
  ['perspective', '透视'],
  ['rotate', '旋转'],
  ['clipboardGrey', '复制视图'],
];

const STYLES = [
  ['shaded', '带边着色'],
  ['wire', '带有淡化边的线框'],
  ['rainbow', '面分析'],
  ['shadedSoft', '着色'],
  ['wireDash', '带有隐藏边的线框'],
  ['', ''],
  ['halfCube', '局部着色'],
  ['wireAll', '静态线框'],
];

function IconGrid({ items, className }: { items: string[][]; className: string }) {
  return (
    <div className={clsx('grid shrink-0 auto-rows-[17px] pt-px', className)}>
      {items.map(([name, label], i) => (name ? <IconButton key={name} name={name} label={label} icon="size-[11px]" /> : <span key={i} />))}
    </div>
  );
}

function Ribbon() {
  return (
    <div className="flex h-[70px] shrink-0 border-b border-[#e2e2e2] bg-white text-[#222]">
      <div className="flex w-[33px] shrink-0 justify-center border-r border-[#e2e2e2] pt-px">
        <BigButton name="windowCube" label="窗口" className="w-6" icon="size-[22px]" arrow />
      </div>
      <Group label="方位" className="w-[130px]">
        <IconGrid items={VIEWS} className="ml-[5px] grid-cols-[17px_17px_17px]" />
        <IconGrid items={VIEW_OPS} className="ml-[7px] grid-cols-[17px_17px]" />
        <MoreButton name="orient" className="ml-1" />
      </Group>
      <Group label="可见性" className="w-[418px]">
        <BigButton name="showHide" label="显示和隐藏" className="ml-[6px] w-12" />
        <ul className="mt-[2px] ml-2 w-[92px] shrink-0 border border-[#dcdcdc]">
          {[
            ['hideNow', '立即隐藏'],
            ['hide', '隐藏'],
            ['show', '显示'],
          ].map(([name, label]) => (
            <li key={name}>
              <button className="flex h-[17px] items-center gap-[2px] pl-px text-[9px] leading-4">
                <Icon name={name} className="size-[11px]" />
                {label}
              </button>
            </li>
          ))}
        </ul>
        <div className="grid w-[14px] shrink-0 auto-rows-[18px]">
          <button aria-label="上一行" className="flex items-center justify-center">
            <Caret className="rotate-180 opacity-50" />
          </button>
          <button aria-label="下一行" className="flex items-center justify-center">
            <Caret />
          </button>
          <button aria-label="全部显示" className="flex flex-col items-center justify-center gap-px">
            <span className="h-px w-[5px] bg-[#555]" />
            <Caret />
          </button>
        </div>
        <div className="ml-[7px] flex w-[61px] shrink-0 flex-col pt-1">
          <SelectBox label="工作图层" value="1" className="h-[15px] w-[39px]" />
          <button className="mt-px flex h-[18px] items-center gap-[2px] text-[9px] leading-4 whitespace-nowrap">
            <Icon name="moveLayer" className="size-[11px]" />
            移动至图层
          </button>
          <button className="flex h-4 items-center gap-[2px] text-[9px] leading-4 whitespace-nowrap">
            <Icon name="layers" className="size-[11px]" />
            图层设置
          </button>
        </div>
        <BigButton name="section" label="编辑截面" className="ml-px w-[42px]" />
        <BigButton name="cutSection" label="剪切截面" className="w-[42px]" icon="size-[22px]" />
        <BigButton name="seeThrough" label="全部通透显示" className="w-16" />
        <MoreButton name="showHide" className="ml-[3px]" />
      </Group>
      <Group label="样式" className="w-[58px]">
        <IconGrid items={STYLES} className="ml-1 grid-cols-[17px_17px_17px]" />
      </Group>
      <Group label="可视化" className="w-[152px]">
        <BigButton name="prefs" label="首选项" className="ml-[3px] w-9" icon="size-[22px]" />
        <BigButton name="palette" label="编辑对象显示" className="w-[60px]" icon="size-[22px]" />
        <button className="flex w-[46px] shrink-0 flex-col items-center">
          <span className="flex h-[25px] flex-col items-center pt-[2px] text-[9px] leading-[13px] font-bold text-[#54378c]">
            PNG
            <svg viewBox="0 0 6 9" className="ml-3 h-[9px] w-[6px]" aria-hidden="true">
              <path d="M0 0 L6 4.5 L0 9Z" fill="#b22fa0" />
            </svg>
          </span>
          <span className="text-[9px] leading-4 whitespace-nowrap">导出 PNG</span>
          <Caret className="mt-[2px]" />
        </button>
      </Group>
      <DropArrow label="功能区选项" className="mr-[2px] mb-[2px] ml-auto h-2 w-2 self-end" />
    </div>
  );
}

// [icon, label, mode] where mode is "on" for a pressed button and "drop" for one with a list
const SELECTION_TOOLS = [
  ['filterGrey', '类型过滤器', ''],
  ['dotsGrey', '细节过滤', ''],
  ['snapBox', '选择意图', 'drop'],
  ['arrowGrey', '选择优先级', ''],
  ['filterArrow', '重置过滤器', ''],
  ['marquee', '矩形选择', 'drop'],
  ['detail', '高亮显示', ''],
  ['solid', '实体', ''],
  ['snapAll', '捕捉点', 'on'],
  ['endPoint', '端点', 'on'],
  ['midPoint', '中点', 'on'],
  ['curvePoint', '控制点', ''],
  ['spline', '极点', 'on'],
  ['intersect', '交点', ''],
  ['center', '圆弧中心', 'on'],
  ['quadrant', '象限点', ''],
  ['plus', '现有点', 'on'],
  ['onCurve', '曲线上的点', 'on'],
  ['face', '面上的点', ''],
  ['grid', '栅格点', ''],
];

const VIEW_TOOLS = [
  ['fit', '适合窗口', ''],
  ['pan', '平移', ''],
  ['rotate', '旋转', ''],
  ['zoomAll', '布局', 'drop'],
  ['trimetric', '定向视图', 'drop'],
  ['shaded', '渲染样式', 'drop'],
  ['showHide', '显示和隐藏', 'drop'],
];

function Tools({ items }: { items: string[][] }) {
  return (
    <>
      {items.map(([name, label, mode]) => (
        <div key={name} className="flex">
          <IconButton
            name={name}
            label={label}
            className={mode === 'on' ? 'mx-px h-[15px] w-[15px] bg-[#c7d7d5]' : 'h-[15px] w-4'}
            icon="size-3"
          />
          {mode === 'drop' && <DropArrow label={`${label}选项`} />}
        </div>
      ))}
    </>
  );
}

function SelectionBar() {
  return (
    <div className="flex h-6 shrink-0 items-center border-b border-[#97a5a9] bg-white">
      <button className="ml-[6px] flex items-center gap-[2px] text-[10px] leading-4 text-[#222]">
        <Icon name="menu" className="size-3" />
        <span>
          菜单(<u>M</u>)
        </span>
        <Caret />
      </button>
      <span className="ml-[3px] h-5 w-px bg-[#ddd]" />
      <SelectBox label="类型过滤器" value="没有选择过滤器" className="ml-[7px] h-4 w-[111px]" />
      <SelectBox label="选择范围" value="整个装配" className="ml-[5px] h-4 w-[117px]" />
      <div className="ml-[3px] flex items-center">
        <Tools items={SELECTION_TOOLS} />
      </div>
      <span className="mr-[5px] ml-1 h-5 w-px bg-[#ddd]" />
      <Tools items={VIEW_TOOLS} />
      <span className="ml-1 h-5 w-px bg-[#ddd]" />
      <DropArrow label="选择条选项" className="mr-[2px] ml-auto h-2 w-2 self-end" />
    </div>
  );
}

const RAIL = [
  ['gear', '资源条选项', 'h-[18px] mb-[9px]', 'size-[11px]'],
  ['assemblyNav', '装配导航器', 'h-[30px] border-y border-l border-[#c0c0c0] bg-white', 'size-4'],
  ['constraint', '约束导航器', 'h-[26px]', 'size-4'],
  ['partNav', '部件导航器', 'h-7', 'size-4'],
  ['library', '重用库', 'h-7', 'size-4'],
  ['info', 'HD3D 工具', 'h-11', 'size-[17px]'],
  ['web', 'Web 浏览器', 'h-7', 'size-4'],
  ['clock', '历史记录', 'h-10', 'size-4'],
  ['colors', '系统材料', 'h-[22px]', 'size-4'],
  ['materials', 'Process Studio', 'h-7', 'size-4'],
  ['robot', '加工向导', 'h-7', 'size-4'],
  ['roles', '角色', 'h-7', 'size-4'],
];

function ResourceRail() {
  return (
    <nav aria-label="资源条" className="flex w-[21px] shrink-0 flex-col border-r border-[#bcbcbc] bg-[#dcdcdc]">
      {RAIL.map(([name, label, box, icon]) => (
        <button key={name} aria-label={label} className={clsx('ml-px flex shrink-0 items-center justify-center', box)}>
          <Icon name={name} className={icon} />
        </button>
      ))}
    </nav>
  );
}

function TreeCheck({ id, checked }: { id: string; checked?: boolean }) {
  return (
    <span className="relative size-[9px] shrink-0">
      <input id={id} type="checkbox" defaultChecked={checked} className="peer block size-[9px] appearance-none border border-[#222] bg-white" />
      <svg viewBox="0 0 10 10" className="pointer-events-none absolute inset-0 hidden size-[9px] peer-checked:block" aria-hidden="true">
        <path d="M2 5 L4.5 7.5 L9 1.5" fill="none" stroke="#e01818" strokeWidth="2" />
      </svg>
    </span>
  );
}

const CELL = 'h-4 border-r border-b border-[#ececec] p-0';

function NavigatorTable() {
  return (
    <table className="w-full table-fixed border-collapse text-[10px] leading-[15px] text-[#222]">
      <colgroup>
        <col className="w-[152px]" />
        <col className="w-6" />
        <col className="w-4" />
        <col className="w-4" />
        <col />
      </colgroup>
      <thead>
        <tr className="bg-[#f0f0f0] text-left">
          <th className="h-[15px] border-r border-[#ccc] p-0 pl-1 font-normal">描述性部件名</th>
          <th className="h-[15px] border-r border-[#ddd] p-0 pl-[3px] font-normal">信..</th>
          <th className="h-[15px] border-r border-[#ddd] p-0 pl-1 font-normal">
            <span className="block w-[9px] overflow-hidden">只</span>
          </th>
          <th className="h-[15px] border-r border-[#ddd] p-0 pl-1 font-normal">
            <span className="block w-[9px] overflow-hidden">已</span>
          </th>
          <th className="h-[15px] border-r border-[#ddd] p-0 pl-[3px] font-normal">数量</th>
        </tr>
      </thead>
      <tbody>
        {Array.from({ length: 28 }, (_, row) => (
          <tr key={row} className="even:bg-[#f9f9f9]">
            <td className="h-4 border-r-2 border-b border-r-[#8f8f8f] border-b-[#ececec] p-0">
              {row === 0 && (
                <div className="flex h-[15px] items-center pl-1">
                  <button aria-label="展开" className="w-[10px] text-left text-[9px] leading-[15px]">
                    +
                  </button>
                  <TreeCheck id="tree-section" />
                  <label htmlFor="tree-section" className="ml-px flex items-center gap-[2px]">
                    <Icon name="folder" className="size-[11px]" />
                    截面
                  </label>
                </div>
              )}
              {row === 1 && (
                <div className="flex h-[15px] items-center pl-[7px]">
                  <span className="-mt-2 mr-px h-2 w-[6px] border-b border-l border-dotted border-[#aaa]" />
                  <TreeCheck id="tree-part" checked />
                  <label htmlFor="tree-part" className="ml-[2px] flex items-center gap-[2px] font-bold whitespace-nowrap">
                    <Icon name="part" className="size-[10px]" />
                    bzx2.0 - 副本 (2)
                  </label>
                </div>
              )}
            </td>
            <td className={CELL} />
            <td className={CELL}>{row === 1 && <Icon name="save" className="mx-auto size-[10px]" />}</td>
            <td className={CELL} />
            <td className={CELL} />
          </tr>
        ))}
      </tbody>
    </table>
  );
}

function PanelFold({ label }: { label: string }) {
  return (
    <button className="flex h-[18px] shrink-0 items-center justify-between border-b border-[#c4c4c4] pr-[3px] pl-1 text-xs leading-[17px] text-[#4a97c0]">
      {label}
      <svg viewBox="0 0 10 8" className="h-2 w-[10px]" aria-hidden="true">
        <path d="M1 0.500 L5 6 L9 0.500" fill="none" stroke="#2f86b8" strokeWidth="2" />
      </svg>
    </button>
  );
}

function Navigator() {
  return (
    <aside className="flex w-[254px] shrink-0 flex-col border-r border-[#97a5a9] bg-white pr-[6px] pb-1 pl-1">
      <div className="flex h-[21px] shrink-0 items-center justify-between pr-1 pl-[3px]">
        <h2 className="text-[10px] leading-4 text-[#222]">装配导航器</h2>
        <button aria-label="最大化" className="h-[9px] w-[10px] border border-[#222]" />
      </div>
      <div className="min-h-0 flex-1 overflow-hidden border border-[#d8d8d8]">
        <NavigatorTable />
      </div>
      <div className="flex h-[14px] shrink-0 items-center bg-[#f0f0f0]">
        <button aria-label="向左滚动" className="flex w-[15px] justify-center">
          <svg viewBox="0 0 6 8" className="h-[7px] w-[5px]" aria-hidden="true">
            <path d="M5 0.5 L1 4 L5 7.5" fill="none" stroke="#444" strokeWidth="1.5" />
          </svg>
        </button>
        <div className="flex h-3 flex-1">
          <div className="w-[79%] bg-[#cdcdcd]" />
        </div>
        <button aria-label="向右滚动" className="flex w-[15px] justify-center">
          <svg viewBox="0 0 6 8" className="h-[7px] w-[5px]" aria-hidden="true">
            <path d="M1 0.5 L5 4 L1 7.5" fill="none" stroke="#444" strokeWidth="1.5" />
          </svg>
        </button>
      </div>
      <div className="mt-px h-1 shrink-0 border-b border-[#bbb] bg-[#dcdcdc]" />
      <PanelFold label="预览" />
      <PanelFold label="相依性" />
    </aside>
  );
}

const FRONT =
  'M541 417 C547 413 554 413 561 413 L582 411.5 C628 408 668 455 681 488 L698 538 C705 560 702 574 690 583 C680 591 670 594.5 655 595 L588 599 C558 598 541 586 532 562 L515 512 C500 462 513 440 541 417Z';
const BODY =
  'M541 417 L822 185 C834 174 848 170 860 170 L885 169 C930 168 962 198 978 238 L996 289 C1000 310 1000 328 980 347 L713 565 L690 583 L600 590 L530 480Z';
const FACE =
  'M550 473 L572 472 C595 472 613 489 621 510 L639 560 C641 567 640 571 633 571 L565 574 C556 575 551 571 548 563 L529 514 C523 493 530 475 550 473Z';

function Foot({ side, front, edge }: { side: string; front: string; edge: string }) {
  return (
    <g stroke="#4a3416" strokeWidth="0.8" strokeLinejoin="round">
      <path d={side} fill="#a06000" />
      <path d={front} fill="#ff9c06" />
      <path d={edge} fill="none" />
    </g>
  );
}

function Model() {
  return (
    <g>
      <Foot side="M694 580 L701 593 L712 592 L702 570Z" front="M702 570 L724 555 L732 576 L712 592Z" edge="M705 569 L715 590" />
      <Foot side="M800 494 L806 506 L817 506 L807 484Z" front="M807 484 L829 468 L838 488 L817 506Z" edge="M810 483 L820 503" />
      <Foot side="M908 405 L914 417 L926 417 L916 394Z" front="M916 394 L937 378 L946 399 L926 417Z" edge="M919 394 L928 415" />
      <path d={BODY} fill="url(#body)" />
      <g clipPath="url(#bodyClip)">
        <path d="M900 166 C940 170 966 200 979 238" fill="none" stroke="#ff9c00" strokeWidth="8" filter="url(#blur5)" opacity="0.8" />
        <path d="M979 238 L997 289 L1001 320" fill="none" stroke="#ff9400" strokeWidth="16" filter="url(#blur2)" opacity="0.8" />
        <path d="M1003 312 C1002 330 995 340 978 352" fill="none" stroke="#935a00" strokeWidth="12" filter="url(#blur5)" opacity="0.8" />
      </g>
      <g clipPath="url(#frontClip)">
        <path d={FRONT} fill="url(#front)" />
        <path d="M534 418 C508 440 500 465 512 505" fill="none" stroke="#b87000" strokeWidth="22" filter="url(#blur9)" />
        <ellipse cx="512" cy="510" rx="16" ry="62" fill="#a06200" filter="url(#blur9)" />
        <path d={FACE} fill="none" stroke="#8c5600" strokeWidth="12" filter="url(#blur5)" opacity="0.35" />
        <path d="M606 476 C622 492 630 512 652 580" fill="none" stroke="#8c5600" strokeWidth="20" filter="url(#blur9)" opacity="0.9" />
        <path d="M588 426 C625 427 652 450 668 484" fill="none" stroke="#ffbe0c" strokeWidth="28" filter="url(#blur9)" />
        <path d="M585 412 C632 410 668 450 682 490" fill="none" stroke="#ffb800" strokeWidth="14" filter="url(#blur5)" opacity="0.8" />
        <ellipse cx="600" cy="438" rx="16" ry="9" fill="#ffd21c" transform="rotate(15 600 438)" filter="url(#blur9)" />
        <ellipse cx="642" cy="448" rx="11" ry="24" fill="#ffd61c" transform="rotate(-38 642 448)" filter="url(#blur5)" />
        <ellipse cx="649" cy="454" rx="6" ry="13" fill="#ffff3c" transform="rotate(-34 649 454)" filter="url(#blur5)" />
        <path d="M684 494 L702 545" stroke="#fb9500" strokeWidth="20" filter="url(#blur5)" />
        <ellipse cx="660" cy="587" rx="38" ry="13" fill="#4a2c00" filter="url(#blur9)" />
        <ellipse cx="600" cy="597" rx="36" ry="12" fill="#6a4200" filter="url(#blur5)" />
      </g>
      <path d={FACE} fill="#9c5e00" />
      <g fill="none" stroke="#3b2a14" strokeWidth="0.8" opacity="0.85">
        <path d={FACE} />
        <path d="M541 417 C547 413 554 413 561 413 L582 411.5 C628 408 668 455 681 488 L698 538 C705 560 702 574 690 583" />
        <path d="M550 473 C545 452 544 428 561 413 L849 176 Q855 171 861 170" />
        <path d="M572 472 C566 450 566 428 582 411.5 L872 174 Q878 169 885 169" />
        <path d="M621 510 Q652 506 681 488 L969 250 Q975 245 978 238" />
        <path d="M639 560 Q670 556 698 538 L987 301 Q993 297 996 289" />
        <path d="M822 185 C834 176 842 176 849 176 L883 174 C922 174 956 212 969 250 L987 301 C993 318 991 328 989 337" />
        <path d="M515 512 Q522 516 530 514 M532 562 Q540 566 548 564 M561 575 Q567 590 580 598 M634 571 Q642 590 657 594" />
      </g>
      <g stroke="#3b2a14" strokeWidth="0.7" strokeLinejoin="round">
        <path d="M574 526 L587 525 L593 543 L582 545Z" fill="#ff9c06" />
        <path d="M578 526 L587 525 L593 542 L585 542Z" fill="#ffc30a" />
        <ellipse cx="594.5" cy="565" rx="4.5" ry="6" transform="rotate(-20 594.5 565)" fill="#ffc30a" />
        <path d="M592 560 L597 570" />
      </g>
    </g>
  );
}

function Viewport() {
  return (
    <div className="min-w-0 flex-1 overflow-hidden bg-[linear-gradient(#b5b6b8,#d6d7d9_52%,#e6e8ea_76%,#e6e8ea)]">
      <svg viewBox="275 135 994 531" preserveAspectRatio="xMidYMid slice" className="block size-full" role="img" aria-label="bzx2.0 模型">
        <defs>
          <linearGradient id="body" gradientUnits="userSpaceOnUse" x1="541" y1="417" x2="684" y2="591">
            <stop offset="0" stopColor="#f98b00" />
            <stop offset="0.05" stopColor="#ffa600" />
            <stop offset="0.11" stopColor="#ffb400" />
            <stop offset="0.25" stopColor="#ffc800" />
            <stop offset="0.4" stopColor="#ffce0e" />
            <stop offset="0.48" stopColor="#ffc008" />
            <stop offset="0.59" stopColor="#ff9f00" />
            <stop offset="0.65" stopColor="#fb9600" />
            <stop offset="0.86" stopColor="#fa9500" />
            <stop offset="0.9" stopColor="#e08600" />
            <stop offset="0.96" stopColor="#a26100" />
            <stop offset="1" stopColor="#6c4100" />
          </linearGradient>
          <linearGradient id="front" gradientUnits="userSpaceOnUse" x1="570" y1="411" x2="600" y2="600">
            <stop offset="0" stopColor="#ffa800" />
            <stop offset="0.3" stopColor="#fc9a00" />
            <stop offset="0.6" stopColor="#e08800" />
            <stop offset="0.8" stopColor="#b87000" />
            <stop offset="1" stopColor="#6a4200" />
          </linearGradient>
          <filter id="blur2" x="-50%" y="-50%" width="200%" height="200%">
            <feGaussianBlur stdDeviation="2" />
          </filter>
          <filter id="blur5" x="-80%" y="-80%" width="260%" height="260%">
            <feGaussianBlur stdDeviation="5" />
          </filter>
          <filter id="blur9" x="-100%" y="-100%" width="300%" height="300%">
            <feGaussianBlur stdDeviation="9" />
          </filter>
          <clipPath id="bodyClip">
            <path d={BODY} />
          </clipPath>
          <clipPath id="frontClip">
            <path d={FRONT} />
          </clipPath>
        </defs>
        <Model />
        <g fill="none" stroke="#dcbfa0" strokeWidth="1.1">
          <path d="M781 472 L758 403 M781 472 L824 438 M781 472 L722 475.5" />
          <path d="M748 474 L734 434 L768 433 L793 413 L806 452 L772 453 L748 474" />
        </g>
        <path d="M755 395 L754 404 L760 402Z M832 431 L822 435 L826 440Z M714 476 L723 473 L723 479Z" fill="#b4b8bf" />
        <g fill="#d3ccc6" fontSize="9">
          <text x="750" y="394">Z</text>
          <text x="831" y="434">X</text>
          <text x="708" y="479">Y</text>
        </g>
        <g stroke="#b4b4b4" strokeWidth="0.8" strokeLinejoin="round">
          <path d="M298 607 L311 600 L322 599 L327 614 L317 622 L304 621Z" fill="#d3d3d3" />
          <path d="M298 607 L310 610 L322 599 M310 610 L317 622" fill="none" />
        </g>
        <path d="M317 622 L309 600" stroke="#1234c8" strokeWidth="2" />
        <path d="M308 596 L307 604 L313 602Z" fill="#1234c8" />
        <path d="M318 621 L329 612" stroke="#cf3838" strokeWidth="1.6" />
        <path d="M333 609 L326 611 L330 616Z" fill="#cf3838" />
        <path d="M316 623 L300 623" stroke="#2f8a34" strokeWidth="1.6" />
        <path d="M295 623 L302 620 L302 626Z" fill="#2f8a34" />
        <circle cx="317" cy="623" r="2.5" fill="#aaa" />
        <g fontSize="9">
          <text x="304" y="597" fill="#4060e0">Z</text>
          <text x="332" y="611" fill="#e06060">X</text>
          <text x="290" y="627" fill="#2f8a34">Y</text>
        </g>
      </svg>
    </div>
  );
}

function NetMeter() {
  return (
    <div className="absolute right-[28px] bottom-px flex items-center">
      <div className="-mr-5 flex h-9 w-[70px] flex-col justify-center rounded-l-full bg-[#343641] pl-2 text-[9px] leading-[17px] text-[#a5a7b0] shadow">
        {[
          ['M5 0 L9 5 H6.5 V9 H3.5 V5 H1Z', '#3fa9f0'],
          ['M5 9 L9 4 H6.5 V0 H3.5 V4 H1Z', '#37c043'],
        ].map(([d, color]) => (
          <div key={color} className="flex items-center">
            <svg viewBox="0 0 10 9" className="h-[6px] w-[7px]" aria-hidden="true">
              <path d={d} fill={color} />
            </svg>
            <b className="ml-3 text-white">0</b>
            <span className="text-[9px]">K/s</span>
          </div>
        ))}
      </div>
      <div className="relative flex size-[49px] items-center justify-center rounded-full bg-[#535868] text-xl text-[#eceef2] shadow">
        <svg viewBox="0 0 48 48" className="absolute inset-0 size-full" aria-hidden="true">
          <path d="M24 3.5 A20.500 20.5 0 0 1 44 29" fill="none" stroke="#3fc8c0" strokeWidth="1.5" />
          <path d="M44 29 A20.5 20.5 0 0 1 27 44.3" fill="none" stroke="#86cc74" strokeWidth="1.5" />
          <path d="M27 44.3 A20.5 20.5 0 0 1 5 32" fill="none" stroke="#dcb646" strokeWidth="1.5" />
        </svg>
        <span className="font-light">68</span>
        <span className="mt-2 text-[9px]">%</span>
      </div>
    </div>
  );
}

function StatusBar() {
  return (
    <footer className="flex h-[15px] shrink-0 items-center border-t border-[#c8c8c8] bg-white">
      <p className="flex-1 pl-[2px] text-[9px] leading-[14px] font-bold text-[#111]">选择对象并使用 MB3，或者双击某一对象</p>
      <div className="relative z-10 -mt-1 flex h-[18px] items-center gap-1 bg-[#f6f6f6] pr-1 pl-1 text-[13px] leading-4 text-[#555]">
        <span className="h-4 border-l border-dotted border-[#aaa]" />
        <button className="font-['Liberation_Mono',monospace] text-[10px]">CH</button>
        <button className="border border-[#777] text-[11px] leading-3">拼</button>
        <button className="font-bold">中</button>
        <IconButton name="moon" label="半角" className="h-4 w-[14px]" icon="size-[13px]" />
        <IconButton name="punct" label="中文标点" className="h-4 w-[14px]" icon="size-[13px]" />
        <button className="font-bold">简</button>
        <button aria-label="输入法选项" className="flex w-[9px] flex-col items-center gap-1">
          <span className="h-px w-[5px] bg-[#555]" />
          <Caret />
        </button>
      </div>
      <div className="flex w-[197px] items-center gap-[3px] pl-[137px]">
        <Icon name="grid" className="size-[11px] opacity-70" />
        <Icon name="fullScreen" className="size-[11px]" />
      </div>
    </footer>
  );
}

export default function App() {
  return (
    <div className="flex h-screen min-h-[560px] flex-col overflow-hidden bg-white font-['Noto_Sans','Noto_Sans_CJK_SC',sans-serif]">
      <TitleBar />
      <TabBar />
      <Ribbon />
      <SelectionBar />
      <main className="relative flex min-h-0 flex-1">
        <ResourceRail />
        <Navigator />
        <Viewport />
        <NetMeter />
      </main>
      <StatusBar />
      <div className="flex h-[6px] shrink-0 border-t border-[#d0d0d0]">
        <div className="w-[41px] bg-[linear-gradient(90deg,#f0dce0,#e2d8ea)]" />
        <div className="w-[282px] bg-white" />
        <div className="flex-1 bg-[linear-gradient(90deg,#ecd9d8,#f0e2dc_30%,#e6dce4_38%,#f4f4f4_39%,#f4f4f4_44%,#e4e0e2_45%,#f0e0d4_66%,#dcd8da_85%,#d5d5d7)]" />
      </div>
    </div>
  );
}
